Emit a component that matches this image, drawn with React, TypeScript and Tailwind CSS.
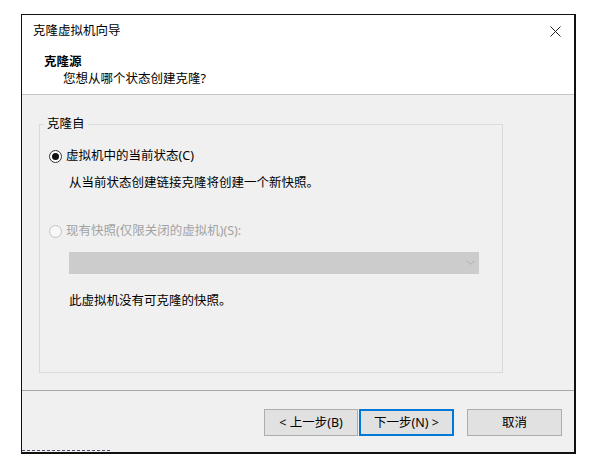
import React from 'react';

const font = { fontFamily: '"Noto Sans", "Noto Sans CJK SC", sans-serif' };

function Radio({ checked, disabled }: { checked?: boolean; disabled?: boolean }) {
  return (
    <span
      className={`flex items-center justify-center w-[13px] h-[13px] rounded-full border shrink-0 ${
        disabled ? 'border-[#c4c4c4] bg-[#f7f7f7]' : 'border-[#333333] bg-white'
      }`}
    >
      {checked && <span className="w-[7px] h-[7px] rounded-full bg-[#111111]" />}
    </span>
  );
}

export default function App() {
  return (
    <div className="w-[595px] h-[460px] bg-white pt-[14px] pl-[21px]" style={font}>
      <div className="w-[555px] h-[440px] border border-[#111111] border-b-2 border-r-2 flex flex-col bg-white text-[12.5px] leading-[16px] text-black">
        {/* Title bar */}
        <div className="h-[32px] flex items-center justify-between pl-[11px] pr-[12px] shrink-0">
          <span>克隆虚拟机向导</span>
          <svg width="11" height="11" viewBox="0 0 11 11" className="mr-[1px]">
            <path d="M0.5 0.5L10.5 10.5M10.5 0.5L0.5 10.5" stroke="#222" strokeWidth="1" />
          </svg>
        </div>

        {/* Header */}
        <div className="h-[48px] pt-[7px] pl-[22px] shrink-0 border-b border-[#c4c4c4]">
          <div className="font-bold">克隆源</div>
          <div className="pl-[19px] mt-[1px]">您想从哪个状态创建克隆?</div>
        </div>

        {/* Body */}
        <div className="h-[295px] bg-[#f0f0f0] pt-[29px] pl-[17px] shrink-0">
          <div className="relative w-[464px] h-[249px] border border-[#dadada] pt-[23px] pl-[9px]">
            <span className="absolute -top-[9px] left-[4px] px-[3px] bg-[#f0f0f0]">克隆自</span>

            <div className="flex items-center gap-[4px] h-[16px]">
              <Radio checked />
              <span>虚拟机中的当前状态(C)</span>
            </div>
            <div className="mt-[11px] pl-[20px]">从当前状态创建链接克隆将创建一个新快照。</div>

            <div className="flex items-center gap-[4px] h-[16px] mt-[32px] text-[#a3a3a3]">
              <Radio disabled />
              <span>现有快照(仅限关闭的虚拟机)(S):</span>
            </div>
            <div className="mt-[13px] ml-[20px] w-[410px] h-[22px] bg-[#cccccc] flex items-center justify-end pr-[4px]">
              <svg width="9" height="6" viewBox="0 0 9 6">
                <path d="M0.5 0.5L4.5 4.5L8.5 0.5" stroke="#b0b0b0" fill="none" strokeWidth="1" />
              </svg>
            </div>
            <div className="mt-[19px] pl-[20px]">此虚拟机没有可克隆的快照。</div>
          </div>
        </div>

        {/* Footer */}
        <div className="flex-1 bg-[#f0f0f0] border-t border-[#a8a8a8] flex flex-col">
          <div className="flex-1 flex justify-end items-start pt-[18px] pr-[12px]">
            <button className="w-[94px] h-[27px] bg-[#e1e1e1] border border-[#adadad]">&lt; 上一步(B)</button>
            <button className="w-[95px] h-[27px] ml-[1px] bg-[#e1e1e1] border-2 border-[#0078d7]">下一步(N) &gt;</button>
            <button className="w-[95px] h-[27px] ml-[13px] bg-[#e1e1e1] border border-[#adadad]">取消</button>
          </div>
          <div className="h-[2px] w-[88px] border-b border-dashed border-[#4a4a6a] mb-[1px]" />
        </div>
      </div>
    </div>
  );
}
